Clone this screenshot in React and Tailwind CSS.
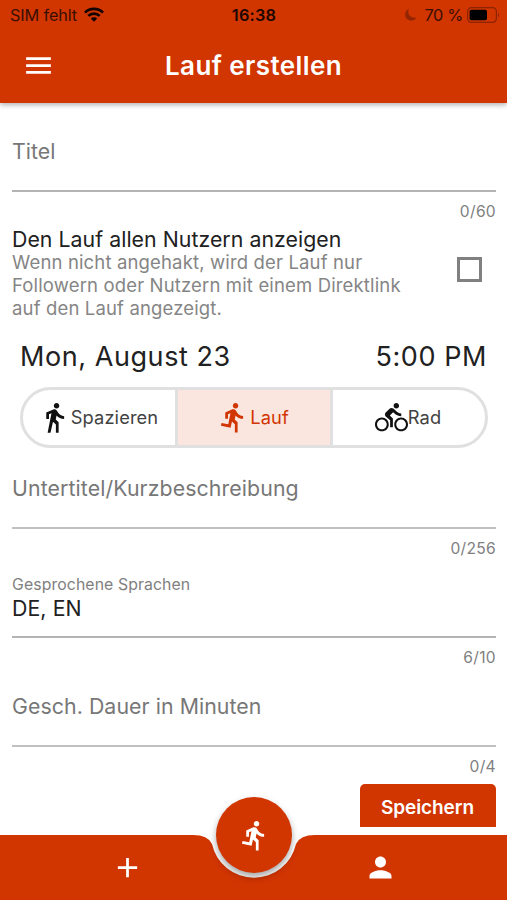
import React, { useState } from "react";
import {
  MdAdd,
  MdDirectionsBike,
  MdDirectionsRun,
  MdDirectionsWalk,
  MdMenu,
  MdPerson,
} from "react-icons/md";

function StatusBar() {
  return (
    <div className="flex h-[30px] items-center text-[16.3px] leading-none text-[#3a0f00]">
      <div className="flex flex-1 items-center pl-[10px]">
        <span className="whitespace-nowrap tracking-[-0.15px]">SIM fehlt</span>
        <svg className="ml-[7px] h-[15px] w-5" viewBox="0 0 20 15" fill="none" stroke="#120400" strokeWidth="2.7">
          <path d="M1 5.6 A12.9 12.9 0 0 1 19 5.6" />
          <path d="M4.3 8.9 A8.2 8.2 0 0 1 15.7 8.9" />
          <path d="M10 14.8 L6.8 11.5 A4.6 4.6 0 0 1 13.2 11.5 Z" fill="#120400" stroke="none" />
        </svg>
      </div>
      <span className="mr-[2px] font-semibold tracking-[0.2px] text-[#1c0700]">16:38</span>
      <div className="flex flex-1 items-center justify-end pr-[7px]">
        <svg className="mr-[7px] h-[13px] w-3" viewBox="0 0 13 14" fill="#932600">
          <path d="M4.6 0.8 A6.6 6.6 0 1 0 12.6 10 A6.4 6.4 0 0 1 4.6 0.8 Z" />
        </svg>
        <span className="whitespace-nowrap tracking-[-0.3px]">70 %</span>
        <svg className="ml-1 h-4 w-[33px]" viewBox="0 0 33 16">
          <rect x="0.6" y="0.6" width="28.8" height="14.8" rx="4" fill="none" stroke="#8c2400" strokeWidth="1.2" />
          <rect x="2.6" y="2.8" width="17.4" height="10.4" rx="1.8" fill="#000" />
          <path d="M31 5.5 Q33 8 31 10.5 Z" fill="#8c2400" />
        </svg>
      </div>
    </div>
  );
}

function Counter({ children }) {
  return (
    <div className="h-[37px] text-right text-[15.6px] leading-[40px] tracking-[0.3px] text-[#808080]">
      {children}
    </div>
  );
}

const activities = [
  { id: "walk", label: "Spazieren", Icon: MdDirectionsWalk },
  { id: "run", label: "Lauf", Icon: MdDirectionsRun },
  { id: "bike", label: "Rad", Icon: MdDirectionsBike },
];

export default function App() {
  const [activity, setActivity] = useState("run");
  const [visible, setVisible] = useState(false);

  return (
    <div className="relative flex h-[900px] w-[507px] flex-col overflow-hidden bg-white font-['Inter',sans-serif] text-[#212121]">
      {/* Header */}
      <header className="z-10 h-[103px] shrink-0 bg-[#d13500] shadow-[0_2px_5px_rgba(0,0,0,0.3)]">
        <StatusBar />
        <div className="flex h-[71px] items-center">
          <button className="w-[77px] pl-[22px] text-white">
            <MdMenu size={33} />
          </button>
          <h1 className="flex-1 pr-[77px] text-center text-[26px] font-semibold tracking-[0.4px] text-white">
            Lauf erstellen
          </h1>
        </div>
      </header>

      {/* Form */}
      <main className="h-[724px] shrink-0 overflow-hidden pl-3 pr-[11px]">
        <div className="h-[89px] border-b-2 border-[#b4b4b4] pt-[33px] text-[21.3px] leading-[30px] tracking-[0.05px] text-[#777]">
          Titel
        </div>
        <Counter>0/60</Counter>

        <div className="flex h-[94px]">
          <div className="flex-1 whitespace-nowrap">
            <h2 className="h-[22px] text-[21.3px] leading-[20px] tracking-[0.04px]">
              Den Lauf allen Nutzern anzeigen
            </h2>
            <p className="text-[18.5px] leading-[22.8px] tracking-[0.15px] text-[#858585]">
              Wenn nicht angehakt, wird der Lauf nur
              <br />
              Followern oder Nutzern mit einem Direktlink
              <br />
              auf den Lauf angezeigt.
            </p>
          </div>
          <button
            className="mr-[14px] mt-[28px] h-[25px] w-[25px] border-3 border-[#808080]"
            onClick={() => setVisible(!visible)}
          >
            {visible && <span className="block h-full w-full bg-[#d13500]" />}
          </button>
        </div>

        <div className="flex h-[64px] justify-between pl-2 pr-[9px] text-[27px] leading-[68px] tracking-[0.57px]">
          <span>Mon, August 23</span>
          <span>5:00 PM</span>
        </div>

        {/* Activity */}
        <div className="ml-2 mr-2 flex h-[61px] overflow-hidden rounded-full border-[3px] border-[#e0e0e0]">
          {activities.map(({ id, label, Icon }) => (
            <button
              key={id}
              onClick={() => setActivity(id)}
              className={`flex flex-1 items-center justify-center border-r-[3px] border-[#e0e0e0] pr-[2px] text-[18.3px] tracking-[0.1px] last:border-r-0 ${
                activity === id ? "bg-[#fae6df] text-[#d13500]" : "text-[#424242]"
              }`}
            >
              <Icon size={33} className={activity === id ? "" : "text-[#111]"} />
              {label}
            </button>
          ))}
        </div>

        <div className="h-[81px] border-b-2 border-[#c0c0c0] pt-[25px] text-[21.3px] leading-[30px] tracking-[0.1px] text-[#777]">
          Untertitel/Kurzbeschreibung
        </div>
        <Counter>0/256</Counter>

        <div className="h-[72px] border-b-2 border-[#b4b4b4] pt-[9px]">
          <div className="text-[15.8px] leading-[20px] tracking-[0.1px] text-[#808080]">Gesprochene Sprachen</div>
          <div className="text-[21.3px] leading-[27px] tracking-[0.1px]">DE, EN</div>
        </div>
        <Counter>6/10</Counter>

        <div className="h-[72px] border-b-2 border-[#c0c0c0] pt-[16px] text-[21.3px] leading-[30px] tracking-[0.07px] text-[#777]">
          Gesch. Dauer in Minuten
        </div>
        <Counter>0/4</Counter>

        <button className="ml-auto block h-[49px] w-[136px] rounded-[5px] bg-[#d13500] pr-px text-[19px] font-semibold tracking-[-0.1px] text-white">
          Speichern
        </button>
      </main>

      {/* Bottom navigation */}
      <nav className="relative mt-auto flex h-[65px] text-white">
        <div className="flex w-[187px] justify-end bg-[#d13500] pr-[43px] pt-4">
          <MdAdd size={33} />
        </div>
        <svg className="h-[65px] w-[134px]" viewBox="0 0 134 65" fill="#d13500">
          <path d="M0 0 H6 Q21 0 25 9 A43 43 0 0 0 109 9 Q113 0 128 0 H134 V65 H0 Z" />
        </svg>
        <div className="flex flex-1 bg-[#d13500] pl-[43px] pt-4">
          <MdPerson size={33} />
        </div>
        <button className="absolute -top-[38px] left-[216px] flex h-[76px] w-[76px] items-center justify-center rounded-full bg-[#d13500] shadow-[0_4px_7px_rgba(0,0,0,0.35)]">
          <MdDirectionsRun size={33} />
        </button>
      </nav>
    </div>
  );
}
